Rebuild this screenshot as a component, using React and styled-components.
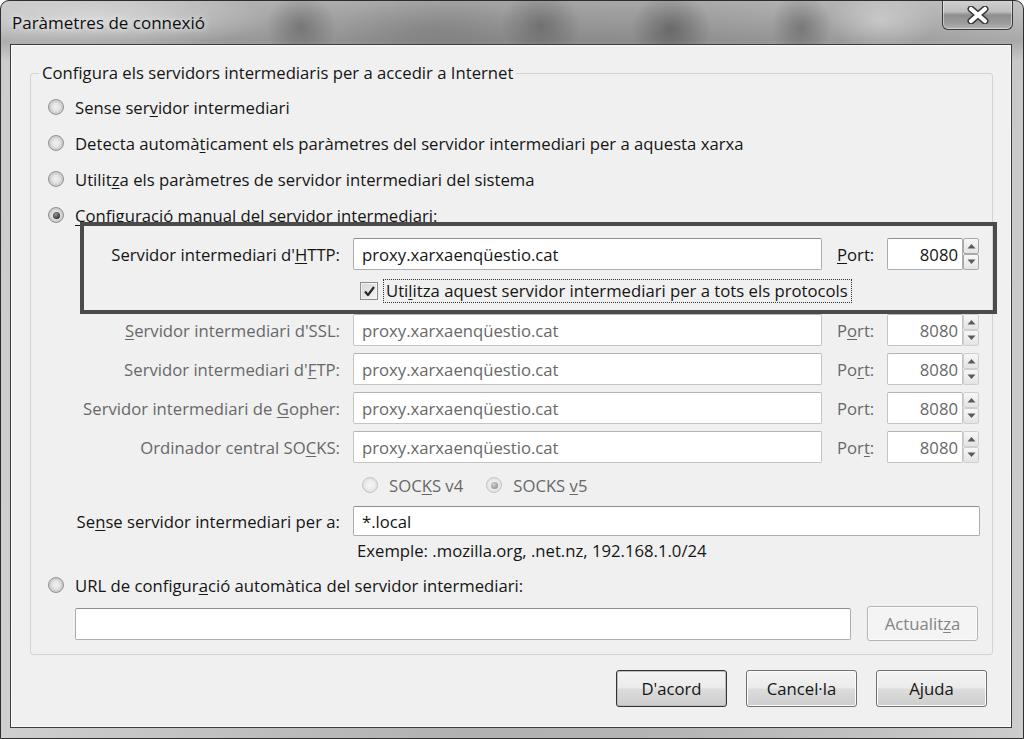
import React from 'react';
import styled, { createGlobalStyle, css } from 'styled-components';

const FONT = `"Open Sans", "Noto Sans", "DejaVu Sans", sans-serif`;
const TEXT = '#151515';
const DIM = '#686868';

const Global = createGlobalStyle`
  html, body { margin: 0; padding: 0; background: #ffffff; }
  * { box-sizing: border-box; }
  u { text-decoration-thickness: 1px; text-underline-offset: 2px; }
`;

const Window = styled.div`
  width: 1024px;
  height: 739px;
  display: flex;
  flex-direction: column;
  border: 1px solid #2e2e2e;
  border-radius: 9px 9px 0 0;
  overflow: hidden;
  font-family: ${FONT};
  font-size: 16.7px;
  color: ${TEXT};
  background:
    radial-gradient(ellipse 170px 30px at 100px 18px, rgba(255,255,255,0.45), transparent),
    radial-gradient(ellipse 35px 34px at 300px 26px, rgba(60,60,60,0.4), transparent),
    radial-gradient(ellipse 90px 34px at 430px 28px, rgba(90,90,90,0.22), transparent),
    radial-gradient(ellipse 40px 36px at 540px 24px, rgba(55,55,55,0.38), transparent),
    radial-gradient(ellipse 40px 36px at 670px 28px, rgba(45,45,45,0.42), transparent),
    radial-gradient(ellipse 30px 34px at 800px 26px, rgba(55,55,55,0.38), transparent),
    radial-gradient(ellipse 55px 30px at 880px 20px, rgba(255,255,255,0.35), transparent),
    linear-gradient(to bottom, rgba(255,255,255,0.12) 0px, rgba(0,0,0,0.1) 40px, rgba(255,255,255,0.2) 60px, rgba(255,255,255,0.25) 100%),
    linear-gradient(to right, #c0c0c0 0%, #a8a8a8 25%, #979797 45%, #9c9c9c 65%, #adadad 85%, #bcbcbc 100%);
`;

const TitleBar = styled.div`
  height: 43px;
  flex: none;
  display: flex;
  justify-content: space-between;
  align-items: flex-start;
`;

const Title = styled.div`
  padding-left: 11px;
  line-height: 43px;
  font-size: 17px;
  color: #0e0e0e;
  text-shadow: 0 0 6px rgba(255,255,255,0.8), 0 0 12px rgba(255,255,255,0.5);
`;

const CloseButton = styled.div`
  width: 71px;
  height: 30px;
  margin-right: 10px;
  margin-top: -1px;
  border: 1px solid #3a3a3a;
  border-top: none;
  border-radius: 0 0 6px 6px;
  background: linear-gradient(to bottom, #d2d2d2 0%, #bdbdbd 40%, #8e8e8e 52%, #9c9c9c 80%, #b4b4b4 100%);
  box-shadow: inset 0 0 0 1px rgba(255,255,255,0.45);
  display: flex;
  align-items: center;
  justify-content: center;
`;

const Content = styled.div`
  flex: 1;
  margin: 0 11px 10px 9px;
  border: 1px solid #3c3c3c;
  background: #f0f0f0;
  box-shadow: inset 0 0 0 1px #fafafa;
  padding: 18px 18px 0 19px;
  display: flex;
  flex-direction: column;
`;

const Group = styled.fieldset`
  margin: 0;
  min-width: 0;
  border: 1px solid #d3d3d3;
  border-radius: 3px;
  padding: 0 14px 13px 17px;
  display: flex;
  flex-direction: column;
`;

const Legend = styled.legend`
  margin-left: -9px;
  padding: 0 3px;
  line-height: 20px;
  color: ${TEXT};
`;

const RadioList = styled.div`
  margin-top: 12px;
  display: flex;
  flex-direction: column;
  gap: 12px;
`;

const RadioRow = styled.div`
  display: flex;
  align-items: center;
  gap: 11px;
  height: 24px;
  white-space: nowrap;
  color: ${p => (p.$disabled ? DIM : TEXT)};
  margin-top: ${p => p.$mt || 0}px;
`;

const Radio = styled.span`
  position: relative;
  flex: none;
  width: 16px;
  height: 16px;
  border-radius: 50%;
  border: 1px solid ${p => (p.$disabled ? '#c4c4c4' : '#929292')};
  background: ${p => (p.$disabled
    ? 'radial-gradient(circle at 50% 50%, #f6f6f6 0%, #ececec 45%, #dedede 75%, #efefef 100%)'
    : 'radial-gradient(circle at 50% 50%, #f2f2f2 0%, #e2e2e2 40%, #c6c6c6 72%, #e6e6e6 100%)')};
  ${p => p.$checked && css`
    &::after {
      content: '';
      position: absolute;
      inset: 3.5px;
      border-radius: 50%;
      background: ${p.$disabled
        ? 'radial-gradient(circle at 40% 35%, #d4d4d4, #8c8c8c 80%)'
        : 'radial-gradient(circle at 40% 35%, #9a9a9a, #262626 80%)'};
    }
  `}
`;

const ManualText = styled.span`
  text-decoration: underline;
  text-decoration-thickness: 1px;
  text-underline-offset: 3px;
`;

const HighlightBox = styled.div`
  margin: -5px -19px 0 32px;
  border: 4px solid #4b4b4b;
  padding: 12px 0 7px 0;
  display: flex;
  flex-direction: column;
  gap: 9px;
`;

const FieldRow = styled.div`
  display: grid;
  grid-template-columns: ${p => p.$cols || '269px 469px 65px 76px 16px'};
  align-items: center;
  height: ${p => p.$h || 32}px;
  margin-left: ${p => p.$indent || 0}px;
  margin-top: ${p => p.$mt || 0}px;
  color: ${p => (p.$disabled ? DIM : TEXT)};
  white-space: nowrap;
`;

const FieldLabel = styled.div`
  display: flex;
  justify-content: flex-end;
  padding-right: 13px;
  min-width: 0;
`;

const TextBox = styled.div`
  height: ${p => p.$h || 32}px;
  width: ${p => (p.$w ? `${p.$w}px` : 'auto')};
  background: #ffffff;
  border: 1px solid ${p => (p.$disabled ? '#c4c4c4' : '#adadad')};
  border-top-color: ${p => (p.$disabled ? '#b4b4b4' : '#8e8e8e')};
  border-radius: 2px;
  padding: 0 8px;
  display: flex;
  align-items: center;
  justify-content: ${p => (p.$right ? 'flex-end' : 'flex-start')};
  padding-right: ${p => (p.$right ? '4px' : '8px')};
  color: ${p => (p.$disabled ? DIM : TEXT)};
`;

const PortLabel = styled.div`
  padding-left: 15px;
`;

const Spinner = styled.div`
  height: 32px;
  width: 16px;
  display: flex;
  flex-direction: column;
`;

const SpinButton = styled.div`
  flex: 1;
  border: 1px solid ${p => (p.$disabled ? '#cfcfcf' : '#a8a8a8')};
  border-radius: 2px;
  background: linear-gradient(to bottom, #f7f7f7, #e4e4e4);
  display: flex;
  align-items: center;
  justify-content: center;
`;

const CheckCell = styled.div`
  grid-column: 2 / -1;
  display: flex;
  align-items: center;
  padding-left: 7px;
  height: 24px;
`;

const CheckBox = styled.span`
  flex: none;
  width: 18px;
  height: 18px;
  border: 1px solid #8c8c8c;
  background: linear-gradient(135deg, #d6d6d6, #f5f5f5);
  box-shadow: inset 0 0 0 1px #f4f4f4;
  display: flex;
  align-items: center;
  justify-content: center;
`;

const FocusLabel = styled.span`
  margin-left: 5px;
  padding: 0 3px 0 2px;
  line-height: 22px;
  border: 1px dotted #333333;
`;

const SocksRow = styled.div`
  margin: 9px 0 0 ${36 + 278}px;
  height: 26px;
  display: flex;
  align-items: center;
  gap: 23px;
  color: ${DIM};
`;

const SocksOption = styled.div`
  display: flex;
  align-items: center;
  gap: 11px;
  white-space: nowrap;
`;

const Example = styled.div`
  margin: 5px 0 0 309px;
  line-height: 20px;
  color: ${TEXT};
`;

const UrlRow = styled.div`
  margin: 9px 0 0 27px;
  height: 35px;
  display: flex;
  align-items: center;
  gap: 16px;
`;

const ButtonBar = styled.div`
  margin-top: 15px;
  display: flex;
  justify-content: flex-end;
  gap: 19px;
  padding-right: 6px;
`;

const Button = styled.div`
  width: ${p => p.$w || 111}px;
  height: ${p => p.$h || 37}px;
  border: 1px solid ${p => (p.$disabled ? '#b5b5b5' : p.$default ? '#333333' : '#707070')};
  border-radius: 3px;
  background: ${p => (p.$disabled
    ? '#f4f4f4'
    : 'linear-gradient(to bottom, #f3f3f3 0%, #ebebeb 48%, #dcdcdc 52%, #cdcdcd 100%)')};
  box-shadow: inset 0 0 0 1px ${p => (p.$default ? '#bdbdbd' : '#fbfbfb')};
  display: flex;
  align-items: center;
  justify-content: center;
  white-space: nowrap;
  color: ${p => (p.$disabled ? '#838383' : TEXT)};
`;

const ArrowUp = () => (
  <svg width="9" height="6" viewBox="0 0 9 6"><path d="M0.5 5.5 L4.5 1 L8.5 5.5 Z" fill="#5a5a5a" /></svg>
);
const ArrowDown = () => (
  <svg width="9" height="6" viewBox="0 0 9 6"><path d="M0.5 0.5 L4.5 5 L8.5 0.5 Z" fill="#5a5a5a" /></svg>
);

const SpinBox = ({ disabled }) => (
  <Spinner>
    <SpinButton $disabled={disabled}><ArrowUp /></SpinButton>
    <SpinButton $disabled={disabled}><ArrowDown /></SpinButton>
  </Spinner>
);

const CloseIcon = () => (
  <svg width="26" height="18" viewBox="0 0 26 18">
    <path d="M6 3 L20 15 M20 3 L6 15" stroke="#3a3a3a" strokeWidth="7" strokeLinecap="round" />
    <path d="M6 3 L20 15 M20 3 L6 15" stroke="#ffffff" strokeWidth="4.2" strokeLinecap="round" />
  </svg>
);

const CheckMark = () => (
  <svg width="13" height="13" viewBox="0 0 13 13">
    <path d="M2 6.5 L5 10 L11 2" stroke="#2a2a2a" strokeWidth="2.2" fill="none" strokeLinejoin="round" />
  </svg>
);

const PROXY = 'proxy.xarxaenqüestio.cat';

const ProxyRow = ({ label, port, disabled, indent }) => (
  <FieldRow $disabled={disabled} $indent={indent}>
    <FieldLabel><span>{label}</span></FieldLabel>
    <TextBox $disabled={disabled}>{PROXY}</TextBox>
    <PortLabel>{port}</PortLabel>
    <TextBox $disabled={disabled} $right>8080</TextBox>
    <SpinBox disabled={disabled} />
  </FieldRow>
);

const RowsStack = styled.div`
  display: flex;
  flex-direction: column;
  gap: 7px;
`;

function FieldRowsBlock() {
  return (
    <RowsStack>
      <ProxyRow disabled indent={36} label={<><u>S</u>ervidor intermediari d'SSL:</>} port={<>P<u>o</u>rt:</>} />
      <ProxyRow disabled indent={36} label={<>Servidor intermediari d'<u>F</u>TP:</>} port={<>Po<u>r</u>t:</>} />
      <ProxyRow disabled indent={36} label={<>Servidor intermediari de <u>G</u>opher:</>} port={<>Port:</>} />
      <ProxyRow disabled indent={36} label={<>Ordinador central SO<u>C</u>KS:</>} port={<>Por<u>t</u>:</>} />
    </RowsStack>
  );
}

export default function App() {
  return (
    <>
      <Global />
      <Window>
        <TitleBar>
          <Title>Paràmetres de connexió</Title>
          <CloseButton><CloseIcon /></CloseButton>
        </TitleBar>
        <Content>
          <Group>
            <Legend>Configura els servidors intermediaris per a accedir a Internet</Legend>
            <RadioList>
              <RadioRow><Radio /><span>Sense ser<u>v</u>idor intermediari</span></RadioRow>
              <RadioRow><Radio /><span>Detecta automà<u>t</u>icament els paràmetres del servidor intermediari per a aquesta xarxa</span></RadioRow>
              <RadioRow><Radio /><span>Utilit<u>z</u>a els paràmetres de servidor intermediari del sistema</span></RadioRow>
              <RadioRow><Radio $checked /><ManualText>Configuració manual del servidor intermediari:</ManualText></RadioRow>
            </RadioList>

            <HighlightBox>
              <ProxyRow label={<>Servidor intermediari d'<u>H</u>TTP:</>} port={<><u>P</u>ort:</>} />
              <FieldRow $h={24}>
                <CheckCell>
                  <CheckBox><CheckMark /></CheckBox>
                  <FocusLabel>Uti<u>l</u>itza aquest servidor intermediari per a tots els protocols</FocusLabel>
                </CheckCell>
              </FieldRow>
            </HighlightBox>

            <FieldRowsBlock />

            <SocksRow>
              <SocksOption><Radio $disabled /><span>SOC<u>K</u>S v4</span></SocksOption>
              <SocksOption><Radio $disabled $checked /><span>SOCKS <u>v</u>5</span></SocksOption>
            </SocksRow>

            <FieldRow $cols="276px 627px" $indent={29} $h={30} $mt={8}>
              <FieldLabel><span>Se<u>n</u>se servidor intermediari per a:</span></FieldLabel>
              <TextBox $h={30}>*.local</TextBox>
            </FieldRow>

            <Example>Exemple: .mozilla.org, .net.nz, 192.168.1.0/24</Example>

            <RadioRow $mt={12}><Radio /><span>URL de configur<u>a</u>ció automàtica del servidor intermediari:</span></RadioRow>

            <UrlRow>
              <TextBox $w={776} />
              <Button $disabled $w={111} $h={35}><span>Actualit<u>z</u>a</span></Button>
            </UrlRow>
          </Group>

          <ButtonBar>
            <Button $default>D'acord</Button>
            <Button>Cancel·la</Button>
            <Button>Ajuda</Button>
          </ButtonBar>
        </Content>
      </Window>
    </>
  );
}
